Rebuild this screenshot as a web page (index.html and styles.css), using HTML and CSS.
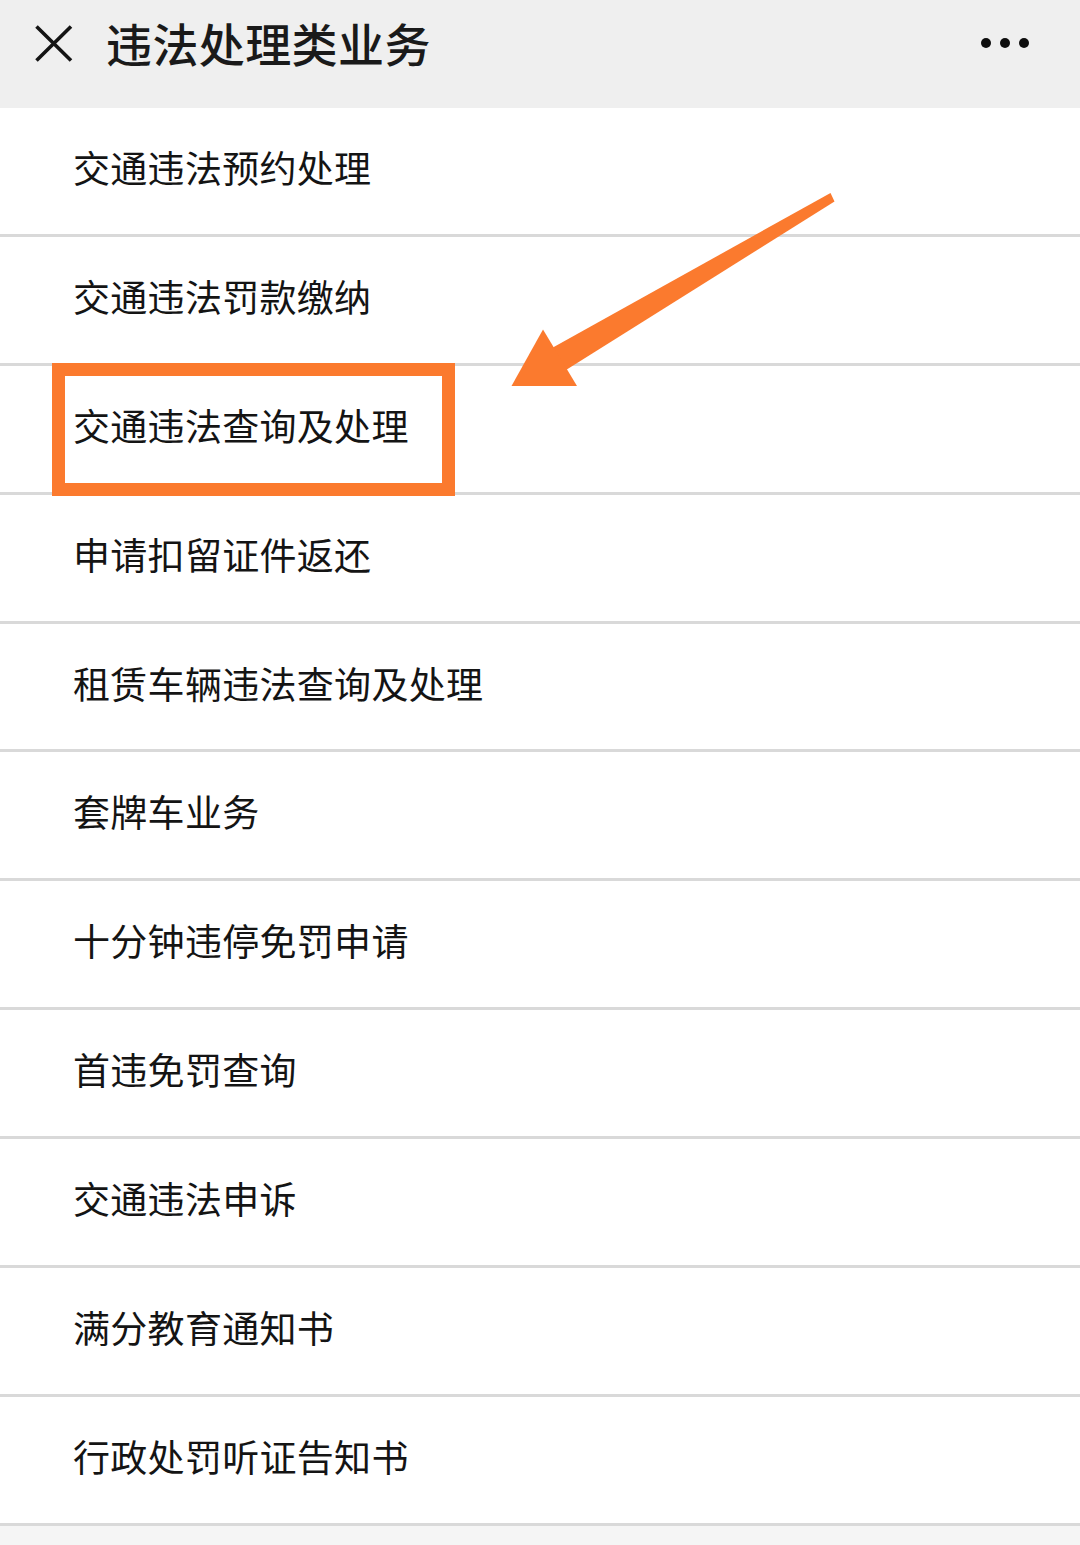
FILE: index.html
```html
<!DOCTYPE html>
<html lang="zh-CN">
<head>
<meta charset="utf-8">
<title>违法处理类业务</title>
<link rel="stylesheet" href="styles.css">
</head>
<body>
<div class="page">
  <header class="topbar">
    <svg class="close" width="40" height="40" viewBox="0 0 40 40">
      <path d="M2.5 2.5 L37 36.5 M37 2.5 L2.5 36.5" stroke="#141414" stroke-width="3.6" fill="none"/>
    </svg>
    <h1 class="title">违法处理类业务</h1>
    <div class="more"><span></span><span></span><span></span></div>
  </header>
  <ul class="list">
    <li class="item">交通违法预约处理</li>
    <li class="item">交通违法罚款缴纳</li>
    <li class="item">交通违法查询及处理</li>
    <li class="item">申请扣留证件返还</li>
    <li class="item">租赁车辆违法查询及处理</li>
    <li class="item">套牌车业务</li>
    <li class="item">十分钟违停免罚申请</li>
    <li class="item">首违免罚查询</li>
    <li class="item">交通违法申诉</li>
    <li class="item">满分教育通知书</li>
    <li class="item">行政处罚听证告知书</li>
  </ul>
  <div class="highlight"></div>
  <svg class="arrow" width="1080" height="600" viewBox="0 0 1080 600">
    <polygon points="552,348 830.5,193 834.5,201.5 566,370" fill="#fb7a2e"/>
    <polygon points="511.5,386 543,329.5 577,386" fill="#fb7a2e"/>
  </svg>
</div>
</body>
</html>
```
FILE: styles.css
```css
html, body {
  margin: 0;
  padding: 0;
  background: #f5f5f5;
}
.page {
  position: relative;
  width: 1080px;
  height: 1545px;
  overflow: hidden;
  background: #f5f5f5;
  font-family: "Noto Sans CJK SC", "Noto Sans", sans-serif;
  color: #151515;
}
.topbar {
  height: 108px;
  box-sizing: border-box;
  background: #efefef;
  display: flex;
  align-items: flex-start;
  padding: 0 0 0 34px;
}
.close {
  margin-top: 24px;
  flex: none;
}
.title {
  margin: 0 0 0 32px;
  font-size: 46px;
  font-weight: 500;
  line-height: 84px;
  letter-spacing: 0.4px;
  color: #1a1a1a;
  flex: 1;
}
.more {
  display: flex;
  gap: 9px;
  margin: 38px 51px 0 0;
}
.more span {
  width: 10px;
  height: 10px;
  border-radius: 50%;
  background: #0e0e0e;
}
.list {
  list-style: none;
  margin: 0;
  padding: 0;
  background: #ffffff;
}
.item {
  height: 128.9px;
  box-sizing: border-box;
  border-bottom: 3px solid #d9d9d9;
  display: flex;
  align-items: center;
  padding: 0 0 8px 73px;
  font-size: 37px;
  letter-spacing: 0.3px;
  color: #141414;
}
.highlight {
  position: absolute;
  left: 52px;
  top: 362.5px;
  width: 403px;
  height: 133.5px;
  box-sizing: border-box;
  border: 13px solid #fb7a2e;
}
.arrow {
  position: absolute;
  left: 0;
  top: 0;
}
```
